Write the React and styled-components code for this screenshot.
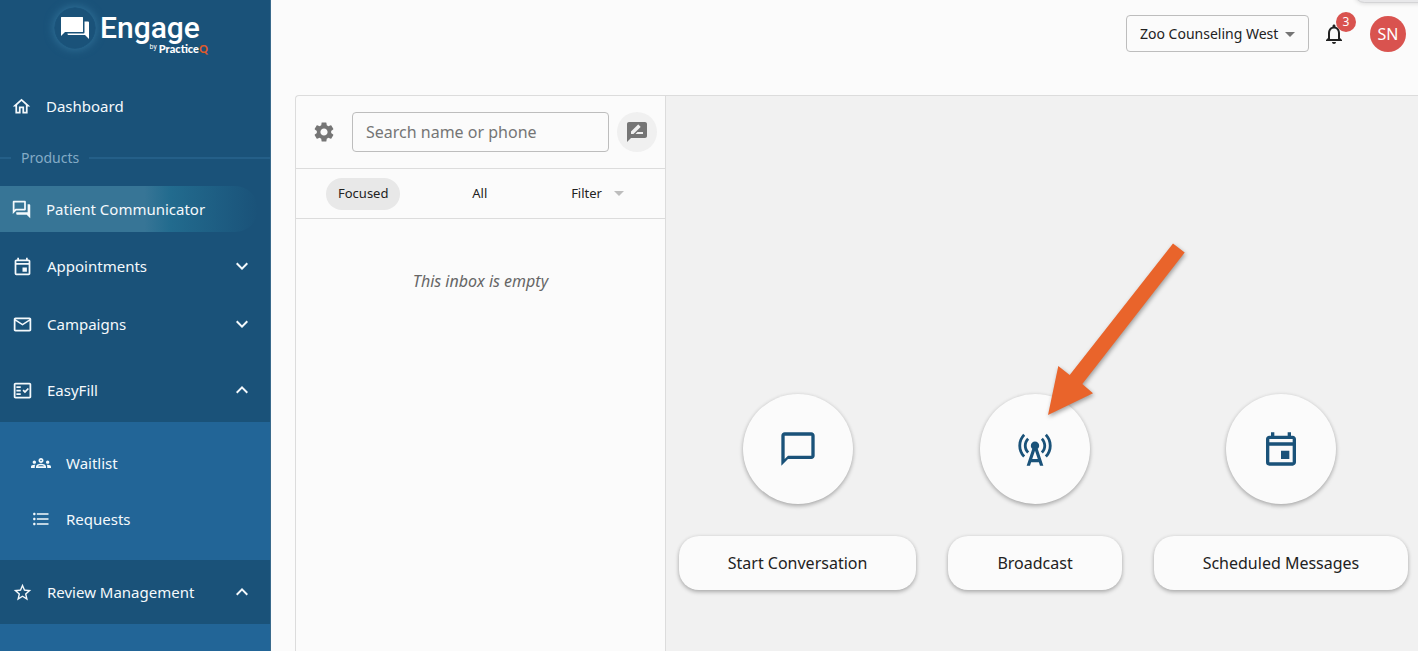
import React from "react";
import styled, { createGlobalStyle, css } from "styled-components";
import {
    MdArrowDropDown,
    MdCellTower,
    MdChatBubbleOutline,
    MdExpandLess,
    MdExpandMore,
    MdFormatListBulleted,
    MdMailOutline,
    MdNotificationsNone,
    MdOutlineEvent,
    MdOutlineFactCheck,
    MdOutlineForum,
    MdOutlineGroups,
    MdOutlineHome,
    MdRateReview,
    MdSettings,
    MdStarOutline,
} from "react-icons/md";

const GlobalStyle = createGlobalStyle`
    * {
        box-sizing: border-box;
    }
    body {
        margin: 0;
        background-color: #fbfbfb;
        color: #222;
        font-family: "Noto Sans", "Open Sans", sans-serif;
        font-size: 16px;
    }
    button, input, select {
        font: inherit;
        color: inherit;
    }
    button {
        border: none;
        padding: 0;
        background: none;
        cursor: pointer;
    }
    svg {
        flex-shrink: 0;
    }
`;

const Page = styled.div`
    display: flex;
    height: 100vh;
    overflow: hidden;
`;

/* ---- sidebar ---- */

const Sidebar = styled.aside`
    width: 271px;
    flex-shrink: 0;
    overflow: hidden;
    background-color: #1a5279;
    border-right: 1px solid #3a6a8c;
    color: #f4f9fc;
`;

const LogoLink = styled.a`
    display: flex;
    height: 83px;
    padding: 7px 0 0 54px;
    color: #fff;
    text-decoration: none;
`;

const LogoMark = styled.span`
    display: flex;
    align-items: center;
    justify-content: center;
    width: 42px;
    height: 42px;
    border-radius: 50%;
    box-shadow: 0 0 8px 1px #2f6f96, inset 0 0 1px #34789f;
`;

const LogoText = styled.span`
    display: flex;
    flex-direction: column;
    align-items: flex-end;
    margin-left: 4px;
    font-family: Roboto, sans-serif;
    font-size: 30px;
    font-weight: 500;
    line-height: 42px;
`;

const LogoByline = styled.span`
    display: flex;
    margin: -6px -8px 0 0;
    font-family: Lato, sans-serif;
    font-size: 11px;
    font-weight: 900;
    line-height: 12px;
    small {
        margin-right: 2px;
        font-family: Roboto, sans-serif;
        font-size: 7px;
        font-weight: 400;
        line-height: 8px;
    }
    b {
        color: #e05a2b;
        font-weight: 900;
    }
`;

const NavItem = styled.a`
    display: flex;
    align-items: center;
    gap: 14px;
    height: 46px;
    margin-right: 12px;
    padding-left: 11px;
    border-radius: 0 23px 23px 0;
    color: inherit;
    font-size: 15px;
    text-decoration: none;
    ${({ $active }) =>
        $active &&
        css`
            background: linear-gradient(
                90deg,
                #377596 0%,
                #377596 56%,
                #226b8e 66%,
                #1a5279 100%
            );
        `}
`;

const SectionLabel = styled.div`
    display: flex;
    align-items: center;
    gap: 10px;
    height: 57px;
    color: #84abc6;
    font-size: 14px;
    &::before,
    &::after {
        content: "";
        height: 2px;
        background-color: #245f88;
    }
    &::before {
        width: 11px;
    }
    &::after {
        flex: 1;
    }
`;

const NavGroup = styled.button`
    display: flex;
    align-items: center;
    gap: 14px;
    width: 100%;
    height: ${({ $open }) => ($open ? 64 : 58)}px;
    padding: 0 16px 0 12px;
    font-size: 15px;
    text-align: left;
    svg:last-child {
        margin-left: auto;
    }
`;

const Groups = styled.div`
    display: flex;
    flex-direction: column;
    padding: 5px 0;
`;

const SubNav = styled.div`
    padding: 13px 0;
    background-color: #226597;
`;

const SubNavItem = styled.a`
    display: flex;
    align-items: center;
    gap: 15px;
    height: 56px;
    padding-left: 31px;
    color: inherit;
    font-size: 15px;
    text-decoration: none;
`;

/* ---- header ---- */

const Main = styled.div`
    position: relative;
    display: flex;
    flex: 1;
    flex-direction: column;
    min-width: 0;
`;

const Header = styled.header`
    display: flex;
    align-items: flex-start;
    justify-content: flex-end;
    height: 95px;
    padding: 15px 12px 0;
`;

/* edge of the drawer that hangs above the header */
const TopTab = styled.div`
    position: absolute;
    top: -18px;
    right: -20px;
    width: 84px;
    height: 21px;
    border: 1px solid #d4d4d6;
    border-radius: 16px;
    background-color: #e8e8ea;
    box-shadow: 0 1px 4px rgba(0, 0, 0, 0.12);
`;

const LocationPicker = styled.label`
    position: relative;
    display: flex;
    align-items: center;
    select {
        height: 37px;
        padding: 0 29px 1px 13px;
        border: 1px solid #bdbdbd;
        border-radius: 4px;
        background-color: #fbfbfb;
        appearance: none;
        font-size: 14px;
    }
    svg {
        position: absolute;
        right: 7px;
        color: #757575;
        pointer-events: none;
    }
`;

const BellButton = styled.button`
    position: relative;
    display: flex;
    margin: 7px 0 0 13px;
`;

const BellBadge = styled.span`
    position: absolute;
    top: -10px;
    right: -10px;
    width: 20px;
    height: 20px;
    border-radius: 50%;
    background-color: #d9534f;
    color: #fff;
    font-size: 12px;
    line-height: 20px;
    text-align: center;
`;

const Avatar = styled.button`
    width: 36px;
    height: 36px;
    margin: 1px 0 0 24px;
    border-radius: 50%;
    background-color: #d9534f;
    color: #fff;
    font-size: 16px;
`;

/* ---- communicator ---- */

const Communicator = styled.main`
    display: flex;
    flex: 1;
    min-height: 0;
    margin-left: 24px;
    border: solid #dcdcdc;
    border-width: 1px 0 0 1px;
    border-top-left-radius: 4px;
`;

const Inbox = styled.section`
    width: 370px;
    flex-shrink: 0;
    border-right: 1px solid #dcdcdc;
`;

const SearchBar = styled.div`
    display: flex;
    align-items: center;
    height: 72px;
    padding: 0 8px 0 16px;
`;

const SearchInput = styled.input`
    flex: 1;
    min-width: 0;
    height: 40px;
    margin: 0 8px 0 16px;
    padding: 0 13px;
    border: 1px solid #bdbdbd;
    border-radius: 4px;
    background-color: #fbfbfb;
    &::placeholder {
        color: #757575;
        opacity: 1;
    }
`;

const IconButton = styled.button`
    display: flex;
    align-items: center;
    justify-content: center;
    width: ${({ $filled }) => ($filled ? 40 : 24)}px;
    height: 40px;
    border-radius: 50%;
    background-color: ${({ $filled }) => ($filled ? "#f0f0f0" : "transparent")};
    color: #757575;
`;

const Tabs = styled.div`
    display: flex;
    align-items: center;
    justify-content: space-between;
    height: 51px;
    padding: 0 26px 0 30px;
    border: solid #dcdcdc;
    border-width: 1px 0;
`;

const Tab = styled.button`
    display: flex;
    align-items: center;
    gap: 5px;
    height: 32px;
    padding: 0 12px 1px;
    border-radius: 16px;
    background-color: ${({ $active }) => ($active ? "#e8e8e8" : "transparent")};
    font-size: 13px;
    svg {
        margin-right: -4px;
        color: #bdbdbd;
    }
`;

const EmptyText = styled.p`
    margin: 50px 0 0;
    color: #666;
    font-style: italic;
    line-height: 24px;
    text-align: center;
`;

const Conversation = styled.section`
    display: flex;
    flex: 1;
    justify-content: center;
    gap: 32px;
    min-width: 0;
    padding: 298px 11px 0 14px;
    background-color: #f1f1f1;
`;

const Action = styled.div`
    position: relative;
    display: flex;
    flex-direction: column;
    align-items: center;
    gap: 32px;
`;

const raised = css`
    background-color: #fbfbfb;
    box-shadow: 0 2px 4px rgba(0, 0, 0, 0.28), 0 0 4px rgba(0, 0, 0, 0.06);
`;

const ActionCircle = styled.button`
    display: flex;
    align-items: center;
    justify-content: center;
    width: 110px;
    height: 110px;
    border-radius: 50%;
    color: #1a5279;
    ${raised}
`;

const ActionButton = styled.button`
    height: 54px;
    padding: 0 49px;
    border-radius: 20px;
    white-space: nowrap;
    ${raised}
`;

const Pointer = styled.svg`
    position: absolute;
    top: -156px;
    left: calc(50% + 8px);
    width: 150px;
    height: 190px;
    filter: drop-shadow(1px 2px 2px rgba(0, 0, 0, 0.35));
    pointer-events: none;
`;

const PointerArrow = () => (
    <Pointer viewBox="0 0 150 190" aria-hidden="true">
        <path
            d="M5 177 15.3 128 26.7 137 130 5.5 141.7 14.5 39.3 146 50 155.3Z"
            fill="#e9642b"
        />
    </Pointer>
);

const Logo = () => (
    <LogoLink href="#">
        <LogoMark>
            <svg width="28" height="22" viewBox="0 0 28 22" fill="#fff">
                <path d="M.5 0h21a.5.5 0 0 1 .5.5v14a.5.5 0 0 1-.5.5H4l-4 4V.5A.5.5 0 0 1 .5 0Z" />
                <path d="M23.5 4.500H27a1 1 0 0 1 1 1V22l-4-4H7.500a1 1 0 0 1-1-1v-.500h16a1 1 0 0 0 1-1Z" />
            </svg>
        </LogoMark>
        <LogoText>
            Engage
            <LogoByline>
                <small>by</small>Practice<b>Q</b>
            </LogoByline>
        </LogoText>
    </LogoLink>
);

const subItems = [
    { label: "Waitlist", icon: MdOutlineGroups },
    { label: "Requests", icon: MdFormatListBulleted },
];

const groups = [
    { label: "Appointments", icon: MdOutlineEvent },
    { label: "Campaigns", icon: MdMailOutline },
];

const actions = [
    { label: "Start Conversation", icon: MdChatBubbleOutline },
    { label: "Broadcast", icon: MdCellTower, pointed: true },
    { label: "Scheduled Messages", icon: MdOutlineEvent },
];

const Group = ({ label, icon: Icon, open }) => (
    <NavGroup $open={open} aria-expanded={!!open}>
        <Icon size={21} />
        {label}
        {open ? <MdExpandLess size={24} /> : <MdExpandMore size={24} />}
    </NavGroup>
);

const App = () => {
    return (
        <Page>
            <GlobalStyle />
            <Sidebar>
                <Logo />
                <nav>
                    <NavItem href="#">
                        <MdOutlineHome size={21} />
                        Dashboard
                    </NavItem>
                    <SectionLabel>Products</SectionLabel>
                    <NavItem href="#" $active>
                        <MdOutlineForum size={21} />
                        Patient Communicator
                    </NavItem>
                    <Groups>
                        {groups.map((group) => (
                            <Group key={group.label} {...group} />
                        ))}
                    </Groups>
                    <Group label="EasyFill" icon={MdOutlineFactCheck} open />
                    <SubNav>
                        {subItems.map(({ label, icon: Icon }) => (
                            <SubNavItem href="#" key={label}>
                                <Icon size={20} />
                                {label}
                            </SubNavItem>
                        ))}
                    </SubNav>
                    <Group label="Review Management" icon={MdStarOutline} open />
                    <SubNav />
                    <SubNav />
                </nav>
            </Sidebar>
            <Main>
                <TopTab />
                <Header>
                    <LocationPicker>
                        <select aria-label="Location">
                            <option>Zoo Counseling West</option>
                        </select>
                        <MdArrowDropDown size={24} />
                    </LocationPicker>
                    <BellButton aria-label="Notifications">
                        <MdNotificationsNone size={24} />
                        <BellBadge>3</BellBadge>
                    </BellButton>
                    <Avatar>SN</Avatar>
                </Header>
                <Communicator>
                    <Inbox>
                        <SearchBar>
                            <IconButton aria-label="Settings">
                                <MdSettings size={24} />
                            </IconButton>
                            <SearchInput
                                type="text"
                                aria-label="Search name or phone"
                                placeholder="Search name or phone"
                            />
                            <IconButton $filled aria-label="New message">
                                <MdRateReview size={24} />
                            </IconButton>
                        </SearchBar>
                        <Tabs>
                            <Tab $active>Focused</Tab>
                            <Tab>All</Tab>
                            <Tab>
                                Filter
                                <MdArrowDropDown size={24} />
                            </Tab>
                        </Tabs>
                        <EmptyText>This inbox is empty</EmptyText>
                    </Inbox>
                    <Conversation>
                        {actions.map(({ label, icon: Icon, pointed }) => (
                            <Action key={label}>
                                <ActionCircle aria-label={label}>
                                    <Icon size={40} />
                                </ActionCircle>
                                <ActionButton>{label}</ActionButton>
                                {pointed && <PointerArrow />}
                            </Action>
                        ))}
                    </Conversation>
                </Communicator>
            </Main>
        </Page>
    );
};

export default App;
